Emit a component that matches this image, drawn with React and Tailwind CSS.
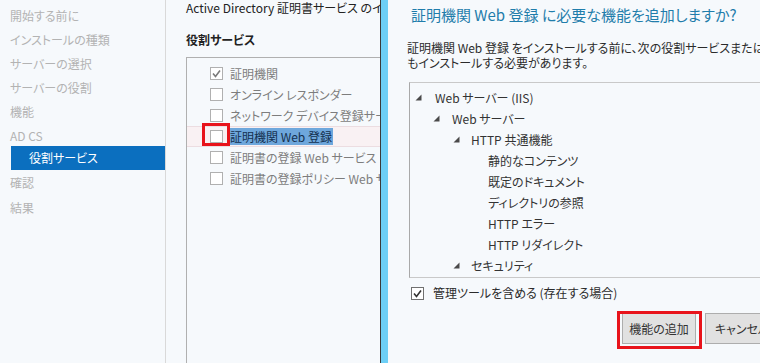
import React from "react";

const Check = ({ color }) => (
  <svg width="11" height="11" viewBox="0 0 11 11" className="block">
    <polyline points="2,5.5 4.5,8.5 9,2.5" fill="none" stroke={color} strokeWidth="1.6" />
  </svg>
);

const Box = ({ checked, color = "#7a7a7a", border = "border-[#b0b0b0]" }) => (
  <div className={`w-[13px] h-[13px] border ${border} bg-white flex items-center justify-center shrink-0`}>
    {checked ? <Check color={color} /> : null}
  </div>
);

const Tri = () => (
  <svg width="7" height="7" viewBox="0 0 7 7" className="block shrink-0">
    <polygon points="6.5,0.5 6.5,6.5 0.5,6.5" fill="#4a4a4a" />
  </svg>
);

export default function App() {
  const nav = [
    "開始する前に",
    "インストールの種類",
    "サーバーの選択",
    "サーバーの役割",
    "機能",
    "AD CS",
  ];
  return (
    <div className="w-[760px] h-[363px] flex bg-[#f6f9fc] overflow-hidden font-['Noto_Sans_CJK_JP',sans-serif] [font-feature-settings:'palt'] text-[12px]">
      {/* Left nav */}
      <nav className="w-[166px] shrink-0 border-r border-[#d9d9d9] pt-[4px] text-[#b3b3b3]">
        {nav.map((n) => (
          <div key={n} className="h-[24px] flex items-center pl-[10px]">
            {n}
          </div>
        ))}
        <div className="h-[24px] mt-[-2px] ml-[11px] bg-[#0b6fbf] text-white flex items-center pl-[18px]">
          役割サービス
        </div>
        <div className="h-[25px] flex items-center pl-[10px]">確認</div>
        <div className="h-[25px] flex items-center pl-[10px]">結果</div>
      </nav>

      {/* Main column */}
      <main className="w-[214px] shrink-0 overflow-hidden pl-[20px]">
        <div className="h-[16px] leading-[16px] whitespace-nowrap text-[#222]">
          Active Directory 証明書サービス のインストールに必要な役割サービスを選択します
        </div>
        <div className="mt-[16px] h-[16px] leading-[16px] font-bold text-[#222]">役割サービス</div>
        <div className="mt-[9px] w-[420px] h-[306px] border-l border-t border-[#b0b0b0] pt-[5px] text-[#7d7d7d]">
          <div className="h-[21px] flex items-center pl-[23px] gap-[7px]">
            <Box checked />
            <span>証明機関</span>
          </div>
          <div className="h-[21px] flex items-center pl-[23px] gap-[7px]">
            <Box />
            <span>オンライン レスポンダー</span>
          </div>
          <div className="h-[21px] flex items-center pl-[23px] gap-[7px] whitespace-nowrap">
            <Box />
            <span>ネットワーク デバイス登録サービス</span>
          </div>
          <div className="h-[21px] flex items-center pl-[23px] gap-[6px] bg-[#f9f1f3] border-y border-[#ecdde1]">
            <div className="relative">
              <Box />
              <div className="absolute left-[-8px] top-[-7px] w-[28px] h-[23px] border-[3px] border-[#e8131b]" />
            </div>
            <span className="bg-[#6ea7dc] text-[#14304f] leading-[17px] px-px">証明機関 Web 登録</span>
          </div>
          <div className="h-[21px] flex items-center pl-[23px] gap-[7px]">
            <Box />
            <span>証明書の登録 Web サービス</span>
          </div>
          <div className="h-[21px] flex items-center pl-[23px] gap-[7px] whitespace-nowrap">
            <Box />
            <span>証明書の登録ポリシー Web サービス</span>
          </div>
        </div>
      </main>

      {/* Dialog */}
      <div className="flex-1 flex min-w-0">
        <div className="w-px bg-[#3a3a3a] shrink-0" />
        <div className="w-[7px] bg-[#6dcff6] shrink-0" />
        <div className="flex-1 min-w-0 overflow-hidden pl-[19px] pt-[5px] text-[#2b2b2b]">
          <div className="pl-[4px] h-[20px] leading-[20px] text-[15px] text-[#1f7dab] whitespace-nowrap">
            証明機関 Web 登録 に必要な機能を追加しますか?
          </div>
          <div className="mt-[15px] leading-[15px] whitespace-nowrap">
            <div>証明機関 Web 登録 をインストールする前に、次の役割サービスまたは機能</div>
            <div>もインストールする必要があります。</div>
          </div>
          <div className="mt-[12px] ml-[2px] w-[420px] h-[196px] border border-[#c9c9c9] border-l-[#a9a9a9] pt-[4px] text-[#333]">
            <div className="h-[21px] flex items-center pl-[5px] gap-[13px]">
              <Tri />
              <span>Web サーバー (IIS)</span>
            </div>
            <div className="h-[21px] flex items-center pl-[23px] gap-[12px]">
              <Tri />
              <span>Web サーバー</span>
            </div>
            <div className="h-[21px] flex items-center pl-[43px] gap-[11px]">
              <Tri />
              <span>HTTP 共通機能</span>
            </div>
            <div className="h-[21px] flex items-center pl-[78px]">静的なコンテンツ</div>
            <div className="h-[21px] flex items-center pl-[78px]">既定のドキュメント</div>
            <div className="h-[21px] flex items-center pl-[78px]">ディレクトリの参照</div>
            <div className="h-[21px] flex items-center pl-[78px]">HTTP エラー</div>
            <div className="h-[21px] flex items-center pl-[78px]">HTTP リダイレクト</div>
            <div className="h-[21px] flex items-center pl-[43px] gap-[11px]">
              <Tri />
              <span>セキュリティ</span>
            </div>
          </div>
          <div className="mt-[5px] h-[20px] flex items-center pl-[4px] gap-[9px] whitespace-nowrap">
            <Box checked color="#333" border="border-[#707070]" />
            <span>管理ツールを含める (存在する場合)</span>
          </div>
          <div className="mt-[10px] flex pl-[215px] whitespace-nowrap">
            <div className="relative shrink-0">
              <button className="w-[74px] h-[31px] bg-[#e1e1e1] border border-[#adadad] text-[#333] text-[12px] flex items-center justify-center">
                機能の追加
              </button>
              <div className="absolute left-[-5px] top-[-2px] w-[85px] h-[38px] border-[3px] border-[#e8131b]" />
            </div>
            <button className="ml-[9px] shrink-0 w-[74px] h-[31px] bg-[#e1e1e1] border border-[#adadad] text-[#333] text-[12px] flex items-center justify-center">
              キャンセル
            </button>
          </div>
        </div>
      </div>
    </div>
  );
}
